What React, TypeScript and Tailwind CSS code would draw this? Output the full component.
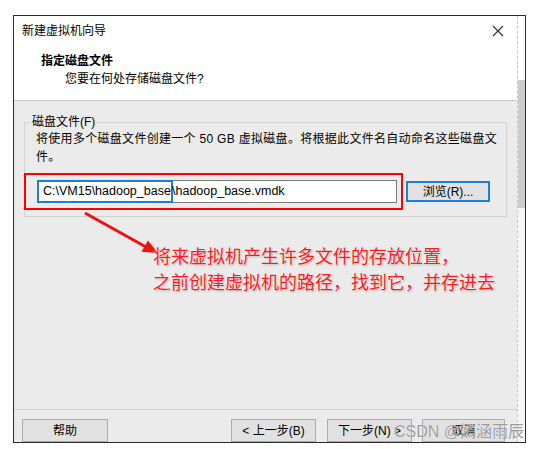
import React from 'react';

const ui = "font-['Liberation_Sans','Noto_Sans_CJK_SC',sans-serif]";

function WinButton({ label, className = '' }: { label: string; className?: string }) {
  return (
    <div
      className={`h-[23px] flex items-center justify-center bg-[#e1e1e1] border border-[#adadad] text-[12px] text-black ${className}`}
    >
      {label}
    </div>
  );
}

export default function App() {
  return (
    <div className={`relative w-[546px] h-[449px] bg-white overflow-hidden ${ui}`}>
      {/* dialog */}
      <div className="ml-[13px] mt-[15px] w-[513px] h-[428px] border border-[#2b2b2b] flex">
        <div className="w-[503px] flex flex-col">
          {/* title bar */}
          <div className="h-[30px] bg-white flex items-center justify-between pl-[8px] pr-[13px]">
            <span className="text-[12px] text-black leading-none">新建虚拟机向导</span>
            <svg width="12" height="12" viewBox="0 0 12 12">
              <path d="M1 1 L11 11 M11 1 L1 11" stroke="#333" strokeWidth="1.2" />
            </svg>
          </div>

          {/* header */}
          <div className="h-[55px] bg-white border-b border-[#c9c9c9] pl-[27px] pt-[6px]">
            <div className="text-[12px] leading-[16px] font-bold text-black font-['Noto_Sans_CJK_SC',sans-serif]">
              指定磁盘文件
            </div>
            <div className="mt-[3px] pl-[24px] text-[12px] leading-[16px] text-black">
              您要在何处存储磁盘文件?
            </div>
          </div>

          {/* content */}
          <div className="relative flex-1 bg-[#ebebeb] pt-[21px] pl-[10px]">
            <div className="relative w-[483px] h-[95px] border border-[#d3d3d3]">
              <span className="absolute left-[6px] -top-[10px] px-[1px] bg-[#ebebeb] text-[12px] leading-[18px] text-black">
                磁盘文件(F)
              </span>
              <div className="pt-[7px] pl-[11px] text-[12px] leading-[18px] text-black tracking-[0.3px]">
                <div>将使用多个磁盘文件创建一个 50 GB 虚拟磁盘。将根据此文件名自动命名这些磁盘文</div>
                <div>件。</div>
              </div>
              <div className="mt-[14px] ml-[12px] flex items-center gap-[9px]">
                <div className="w-[360px] h-[23px] bg-white border border-[#7a7a7a] flex items-stretch text-[12.5px] text-black">
                  <span className="-m-[1px] w-[136px] border-2 border-[#1a7fd6] flex items-center pl-[4px] whitespace-nowrap">
                    C:\VM15\hadoop_base
                  </span>
                  <span className="flex items-center">\hadoop_base.vmdk</span>
                </div>
                <div className="w-[84px] h-[21px] flex items-center justify-center bg-[#e1e1e1] border-2 border-[#1a7fd6] text-[12px] text-black">
                  浏览(R)...
                </div>
              </div>
            </div>

            {/* annotation: red frame */}
            <div className="absolute left-[10px] top-[72px] w-[379px] h-[37px] border-2 border-[#ff0000]" />

            {/* annotation: arrow */}
            <svg className="absolute left-[60px] top-[100px]" width="100" height="60" viewBox="0 0 100 60">
              <line x1="11" y1="12" x2="72" y2="46" stroke="#ee1111" strokeWidth="3" />
              <polygon points="84,52 67.5,50.8 74,39.5" fill="#ee1111" />
            </svg>

            {/* annotation: text */}
            <div className="absolute left-[139px] top-[141px] text-[18px] leading-[26px] text-[#ff1a1a] font-['Noto_Sans_CJK_SC',sans-serif] whitespace-nowrap [text-shadow:0_0_2px_#fff,1px_1px_2px_#aaa]">
              <div>将来虚拟机产生许多文件的存放位置，</div>
              <div>之前创建虚拟机的路径，找到它，并存进去</div>
            </div>
          </div>

          {/* footer */}
          <div className="h-[33px] bg-[#ebebeb] border-t border-[#cfcfcf] pt-[9px] pl-[8px] flex">
            <WinButton label="帮助" className="w-[86px]" />
            <WinButton label="< 上一步(B)" className="w-[85px] ml-[123px]" />
            <WinButton label="下一步(N) >" className="w-[85px] ml-[11px]" />
            <WinButton label="取消" className="w-[83px] ml-[10px]" />
          </div>
        </div>

        {/* scroll strip */}
        <div className="flex-1 flex flex-col border-l border-dashed border-[#c8c8c8] bg-[#f6f6f6]">
          <div className="h-[64px] bg-white" />
          <div className="h-[128px] bg-[#cdcdcd]" />
          <div className="flex-1" />
        </div>
      </div>

      {/* watermark */}
      <div className="absolute left-[394px] top-[422px] text-[16px] leading-[20px] text-[#9c9c9c] whitespace-nowrap [text-shadow:0_0_1px_#fff]">
        CSDN @嫣涵雨辰
      </div>
    </div>
  );
}
